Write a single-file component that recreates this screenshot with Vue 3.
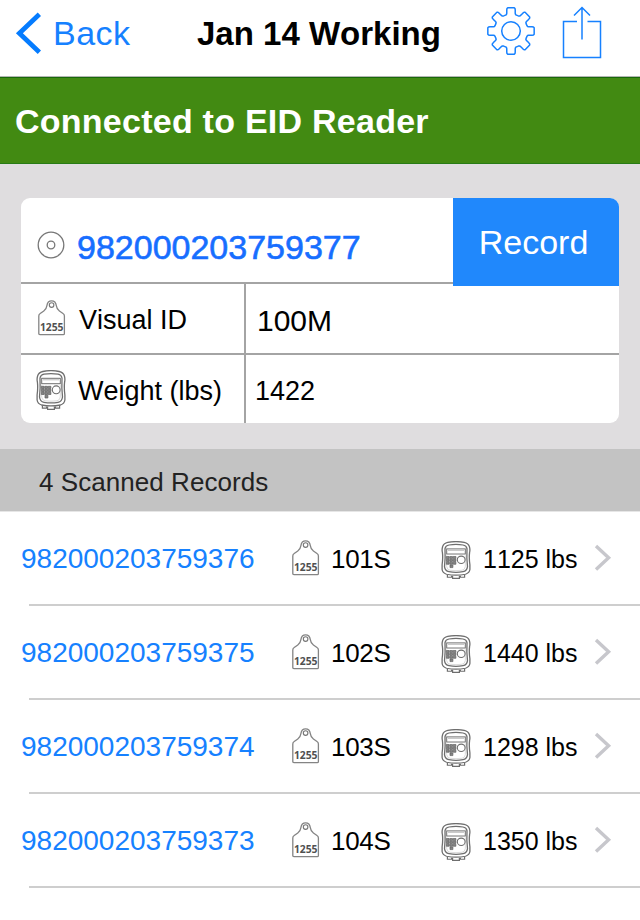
<template>
  <main class="screen">
    <svg class="symbols" aria-hidden="true">
      <symbol id="ear-tag" viewBox="0 0 28 36">
        <path
          d="M0.8 16Q0.8 14.4 2.2 13.5L5.8 11Q8.4 9.2 8.9 5.6Q9.5 0.8 13.6 0.8Q17.7 0.8 18.3 5.6Q18.8 9.2 21.4 11L25 13.5Q26.4 14.4 26.4 16V33.4Q26.4 34.6 25.2 34.6H2Q0.8 34.6 0.8 33.4Z"
          fill="#fff"
          stroke="#848484"
          stroke-width="1.3"
        />
        <circle cx="13.6" cy="5.1" r="2.3" fill="none" stroke="#777" stroke-width="1.1" />
      </symbol>

      <symbol id="scale-head" viewBox="0 0 30 40" preserveAspectRatio="none">
        <g fill="none" stroke="#6e6e6e">
          <path
            d="M1.6 6Q2.6 2.4 6.8 1.5Q15 -0.3 23.2 1.5Q27.4 2.4 28.4 6Q29.3 9 28.6 12Q27.9 18 28.9 25V30Q28.4 33.6 24.5 35Q15 36.8 5.5 35Q1.6 33.6 1.1 30V25Q2.1 18 1.4 12Q0.7 9 1.6 6Z"
            stroke-width="1.3"
          />
          <path
            d="M4 8Q4.6 4.8 8 4.2Q15 3.1 22 4.2Q25.4 4.8 26 8Q25.5 18 26.5 27Q26 31.5 22 32.3Q15 33.6 8 32.3Q4 31.5 3.5 27Q4.5 18 4 8Z"
            stroke-width="1.3"
          />
          <path
            d="M5.7 15V27Q6.2 30.4 9 30.8Q15 31.6 21 30.8Q23.8 30.4 24.3 27V15"
            stroke="#ccc"
            stroke-width="0.7"
          />
          <rect x="5.7" y="8.3" width="18.6" height="5.4" stroke-width="1" />
          <path d="M7 9.8H23" stroke="#aaa" stroke-width="0.8" />
          <circle cx="20.2" cy="19.8" r="3.9" fill="#fff" stroke-width="1.1" />
          <path d="M6.4 35.8V38.2H10.6V36.5M11.6 36.5V39.4H18.4V36.5M19.4 36.5V38.2H23.6V35.8" stroke-width="1.2" />
        </g>
        <path
          d="M5.4 16.3h2.7v2.2H5.4zM8.8 16.3h2.7v2.2H8.8zM12.2 16.3h2.7v2.2h-2.7zM5.4 19.3h2.7v2.2H5.4zM8.8 19.3h2.7v2.2H8.8zM12.2 19.3h2.7v2.2h-2.7zM5.4 22.3h2.7v2.2H5.4zM8.8 22.3h2.7v2.2H8.8zM12.2 22.3h2.7v2.2h-2.7zM9 25.2h2.9v2.8H9z"
          fill="#858585"
          stroke="#606060"
          stroke-width="0.7"
        />
      </symbol>
    </svg>

    <header class="navbar">
      <button type="button" class="back">
        <svg class="back__chevron" viewBox="0 0 26 42">
          <path d="M24.4 2.2L4.4 21.2L24.4 40.2" fill="none" stroke="#057cff" stroke-width="4.8" />
        </svg>
        <span>Back</span>
      </button>

      <h1 class="navbar__title">Jan 14 Working</h1>

      <button type="button" class="navbar__action navbar__action--settings" aria-label="Settings">
        <svg viewBox="0 0 48 48" width="48" height="48">
          <g fill="none" stroke="#1681ff" stroke-width="1.5" stroke-linejoin="round">
            <path :d="gearPath" />
            <circle cx="24" cy="24" r="9.3" />
          </g>
        </svg>
      </button>

      <button type="button" class="navbar__action navbar__action--share" aria-label="Share">
        <svg viewBox="0 0 40 54" width="40" height="54">
          <path
            d="M15 16.5H1.5V52.5H38.5V16.5H25.5M20 34.5V2.5M12 10.5L20 2.5L28 10.5"
            fill="none"
            stroke="#1681ff"
            stroke-width="1.5"
          />
        </svg>
      </button>
    </header>

    <div class="status">Connected to EID Reader</div>

    <section class="entry">
      <div class="card">
        <div class="card__scan">
          <svg class="card__eid-icon" viewBox="0 0 28 28">
            <g fill="none" stroke="#777" stroke-width="1.3">
              <circle cx="14" cy="14" r="12.8" />
              <circle cx="14" cy="14" r="3.8" />
            </g>
          </svg>
          <span class="card__eid">982000203759377</span>
          <button type="button" class="card__record">Record</button>
        </div>

        <div class="field">
          <div class="field__label field__label--tag">
            <svg class="icon-tag" viewBox="0 0 28 36">
              <use href="#ear-tag" width="28" height="36" />
              <text x="1.9" y="30.8" textLength="23.6" lengthAdjust="spacingAndGlyphs" class="tag-number">1255</text>
            </svg>
            <span>Visual ID</span>
          </div>
          <div class="field__value field__value--large">100M</div>
        </div>

        <div class="field field--last">
          <div class="field__label field__label--weight">
            <svg class="icon-scale icon-scale--tall"><use href="#scale-head" /></svg>
            <span>Weight (lbs)</span>
          </div>
          <div class="field__value">1422</div>
        </div>
      </div>
    </section>

    <h2 class="list-header">{{ records.length }} Scanned Records</h2>

    <ul class="records">
      <li v-for="record in records" :key="record.eid" class="record">
        <span class="record__eid">{{ record.eid }}</span>
        <svg class="icon-tag" viewBox="0 0 28 36">
          <use href="#ear-tag" width="28" height="36" />
          <text x="1.9" y="30.8" textLength="23.6" lengthAdjust="spacingAndGlyphs" class="tag-number">1255</text>
        </svg>
        <span class="record__tag">{{ record.tag }}</span>
        <svg class="icon-scale"><use href="#scale-head" /></svg>
        <span class="record__weight">{{ record.weight }} lbs</span>
        <svg class="record__chevron" viewBox="0 0 18 28">
          <path d="M2 2L14.6 13.8L2 25.6" fill="none" stroke="#c7c7cc" stroke-width="3.4" />
        </svg>
      </li>
    </ul>
  </main>
</template>

<script setup>
const records = [
  { eid: '982000203759376', tag: '101S', weight: 1125 },
  { eid: '982000203759375', tag: '102S', weight: 1440 },
  { eid: '982000203759374', tag: '103S', weight: 1298 },
  { eid: '982000203759373', tag: '104S', weight: 1350 },
]

// One tooth outline as [angle offset, radius], repeated eight times
const TOOTH = [
  [-19, 16.8],
  [-15.5, 17.1],
  [-13.4, 18.2],
  [-11.4, 21.4],
  [-10.2, 22.8],
  [-8, 23.4],
  [8, 23.4],
  [10.2, 22.8],
  [11.4, 21.4],
  [13.4, 18.2],
  [15.5, 17.1],
  [19, 16.8],
]

const gearPoints = Array.from({ length: 8 }, (_, i) =>
  TOOTH.map(([offset, radius]) => {
    const angle = ((i * 45 + offset) * Math.PI) / 180
    return `${(24 + radius * Math.sin(angle)).toFixed(2)} ${(24 - radius * Math.cos(angle)).toFixed(2)}`
  }),
).flat()

const gearPath = `M${gearPoints.join('L')}Z`
</script>

<style>
body {
  margin: 0;
  background: #fff;
}
</style>

<style scoped>
.screen {
  width: 640px;
  height: 920px;
  overflow: hidden;
  background: #fff;
  color: #000;
  font-family: 'Liberation Sans', Arial, sans-serif;
  font-kerning: none;
  line-height: 1;
  white-space: nowrap;
}

.symbols {
  position: absolute;
  width: 0;
  height: 0;
}

.tag-number {
  font: 700 9.8px 'Noto Sans', sans-serif;
  fill: #505050;
}

button {
  padding: 0;
  border: 0;
  background: none;
  font-family: inherit;
  cursor: pointer;
}

svg {
  display: block;
  flex: none;
}

.navbar {
  display: flex;
  align-items: flex-start;
  box-sizing: border-box;
  height: 77px;
  padding-left: 15px;
  border-bottom: 1px solid #b4b7b2;
}

.back {
  display: flex;
  align-items: flex-start;
  width: 182px;
  padding-top: 12px;
  color: #1681ff;
  font-size: 34px;
  line-height: 43px;
  letter-spacing: 0.5px;
}

.back__chevron {
  width: 26px;
  height: 42px;
  margin-right: 12px;
}

.navbar__title {
  width: 290px;
  margin: 0;
  padding-top: 12px;
  font-size: 33px;
  font-weight: 700;
  line-height: 43px;
}

.navbar__action--settings {
  padding-top: 7px;
}

.navbar__action--share {
  margin-left: 27px;
  padding-top: 5px;
}

.status {
  box-sizing: border-box;
  height: 87px;
  padding-left: 15px;
  border-top: 1px solid #19680c;
  border-bottom: 1px solid #287b16;
  background: #428a12;
  color: #fff;
  font-size: 34px;
  font-weight: 700;
  line-height: 87px;
  letter-spacing: 0.25px;
}

.entry {
  box-sizing: border-box;
  height: 285px;
  padding: 34px 21px 26px;
  background: #dfdddf;
}

.card {
  height: 225px;
  border-radius: 9px;
  background: #fff;
  overflow: hidden;
}

.card__scan {
  display: flex;
  align-items: flex-start;
  box-sizing: border-box;
  height: 86px;
  padding-left: 16px;
  border-bottom: 2px solid #a4a4a4;
}

.card__eid-icon {
  width: 28px;
  height: 28px;
  margin-top: 33px;
}

.card__eid {
  width: 376px;
  margin-left: 12px;
  color: #176eff;
  font-size: 34px;
  line-height: 98px;
  -webkit-text-stroke: 0.6px #176eff;
}

.card__record {
  position: relative;
  width: 166px;
  height: 88px;
  padding-right: 5px;
  background: #2088fc;
  color: #fff;
  font-size: 34px;
  line-height: 86px;
}

.field {
  display: flex;
  box-sizing: border-box;
  height: 71px;
  border-bottom: 2px solid #a4a4a4;
}

.field--last {
  height: 68px;
  border-bottom: 0;
}

.field__label {
  display: flex;
  align-items: center;
  box-sizing: border-box;
  width: 225px;
  border-right: 2px solid #a4a4a4;
  font-size: 27px;
}

.field__label span {
  padding-top: 4px;
}

.field__label--tag {
  gap: 13px;
  padding-left: 17px;
}

.field__label--tag svg {
  margin-top: -2px;
}

.field__label--weight {
  gap: 12px;
  padding-left: 15px;
}

.field__label--weight svg {
  margin-top: 2px;
}

.field__value {
  padding-left: 9px;
  font-size: 27px;
  line-height: 72px;
}

.field__value--large {
  padding-left: 11px;
  font-size: 30px;
  line-height: 74px;
}

.icon-tag {
  width: 28px;
  height: 36px;
}

.icon-scale {
  width: 30px;
  height: 38px;
}

.icon-scale--tall {
  height: 40px;
}

.list-header {
  box-sizing: border-box;
  height: 63px;
  margin: 0;
  padding-left: 39px;
  border-bottom: 1px solid #e6e6e6;
  background: #c3c3c3;
  color: #222;
  font-size: 26px;
  font-weight: 400;
  line-height: 67px;
  letter-spacing: 0.05px;
}

.records {
  margin: 0;
  padding: 0;
  list-style: none;
}

.record {
  display: grid;
  grid-template-columns: 271px 39px 110px 42px 111px 18px;
  align-items: center;
  box-sizing: border-box;
  height: 94px;
  padding-left: 21px;
  background: linear-gradient(#cecece, #cecece) 8px 100% / 100% 2px no-repeat;
  background-origin: content-box;
}

.record svg {
  margin-top: -2px;
}

.record .icon-scale {
  margin-top: 2px;
}

.record__eid {
  color: #1681ff;
  font-size: 28px;
}

.record__tag {
  font-size: 26px;
  letter-spacing: -0.3px;
}

.record__weight {
  font-size: 25px;
}

.record__chevron {
  width: 18px;
  height: 28px;
}
</style>
